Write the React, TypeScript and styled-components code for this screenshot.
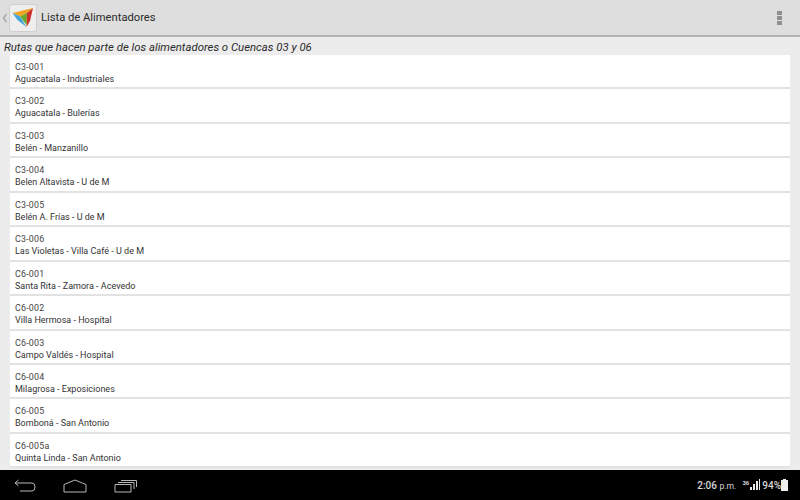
import React from "react";
import styled, { createGlobalStyle } from "styled-components";

const GlobalStyle = createGlobalStyle`
  html, body { margin: 0; padding: 0; background: #ececec; }
  body { font-family: Roboto, "Noto Sans", sans-serif; }
`;

const Screen = styled.div`
  width: 800px;
  height: 500px;
  display: flex;
  flex-direction: column;
  overflow: hidden;
  background: #ececec;
`;

const ActionBar = styled.header`
  height: 35px;
  flex: none;
  display: flex;
  align-items: center;
  background: #dedede;
  border-bottom: 2px solid #b4b4b4;
`;

const UpCaret = styled.svg`
  width: 6px;
  height: 10px;
  margin-left: 2px;
  flex: none;
`;

const LogoTile = styled.div`
  width: 28px;
  height: 28px;
  margin-left: 1px;
  flex: none;
  display: flex;
  align-items: center;
  justify-content: center;
  background: #eeeeee;
  border: 1px solid #cfcfcf;
  border-radius: 3px;
  box-sizing: border-box;
`;

const Title = styled.h1`
  margin: 0 0 0 4px;
  font-size: 11.2px;
  font-weight: 400;
  color: #2a2a2a;
  flex: 1;
`;

const Overflow = styled.div`
  width: 5px;
  margin-right: 18px;
  display: flex;
  flex-direction: column;
  gap: 1px;
`;

const Dot = styled.span`
  height: 4px;
  background: #8f8f8f;
`;

const Heading = styled.div`
  height: 18px;
  flex: none;
  padding: 2px 0 0 4px;
  box-sizing: border-box;
  font-size: 11.35px;
  font-style: italic;
  line-height: 17px;
  color: #2a2a2a;
`;

const List = styled.ul`
  list-style: none;
  margin: 0 10px;
  padding: 0;
  flex: 1;
  min-height: 0;
`;

const Row = styled.li`
  height: 34.45px;
  padding-top: 6px;
  box-sizing: border-box;
  background: #ffffff;
  border-bottom: 2px solid #e2e2e2;
`;

const Code = styled.div`
  padding-left: 5px;
  font-size: 8.9px;
  line-height: 12px;
  letter-spacing: 0.2px;
  color: #444;
`;

const RouteName = styled.div`
  padding-left: 5px;
  font-size: 9px;
  line-height: 12px;
  color: #333;
`;

const NavBar = styled.footer`
  height: 30px;
  flex: none;
  display: flex;
  align-items: center;
  background: #000;
  color: #d8d8d8;
`;

const NavIcon = styled.svg`
  width: 26px;
  height: 14px;
  flex: none;
  fill: none;
  stroke: #b8b8b8;
  stroke-width: 1;
  margin: 2px 10px 0 13px;
`;

const Status = styled.div`
  margin-left: auto;
  margin-right: 12px;
  display: flex;
  align-items: center;
  font-size: 10px;
  font-weight: 500;
`;

const Clock = styled.span`
  margin-right: 6px;
`;

const Meridiem = styled.span`
  font-size: 8.6px;
  font-weight: 400;
`;

const Network = styled.span`
  font-size: 6px;
  font-weight: 700;
  line-height: 6px;
  align-self: flex-start;
  margin-top: 1px;
`;

const Signal = styled.svg`
  margin: 0 2px 0 1px;
  fill: #e8e8e8;
`;

const routes = [
  ["C3-001", "Aguacatala - Industriales"],
  ["C3-002", "Aguacatala - Bulerías"],
  ["C3-003", "Belén - Manzanillo"],
  ["C3-004", "Belen Altavista - U de M"],
  ["C3-005", "Belén A. Frías - U de M"],
  ["C3-006", "Las Violetas - Villa Café - U de M"],
  ["C6-001", "Santa Rita - Zamora - Acevedo"],
  ["C6-002", "Villa Hermosa - Hospital"],
  ["C6-003", "Campo Valdés - Hospital"],
  ["C6-004", "Milagrosa - Exposiciones"],
  ["C6-005", "Bomboná - San Antonio"],
  ["C6-005a", "Quinta Linda - San Antonio"],
];

const Logo = () => (
  <svg width="24" height="22" viewBox="0 0 24 22">
    <polygon points="1.5,6 22,1 16,6 9,9.5" fill="#f0a323" />
    <polygon points="22,1 19,14 15.5,20 15.5,6.5" fill="#cf2f2c" />
    <polygon points="9,9.5 16,6 15.5,18" fill="#6aa82f" />
    <polygon points="1.5,6 9,9.5 15.5,20 6.5,13" fill="#3fa5dc" />
  </svg>
);

const App = () => (
  <Screen>
    <GlobalStyle />
    <ActionBar>
      <UpCaret viewBox="0 0 6 10">
        <path d="M4.5 1 L1.5 5 L4.5 9" fill="none" stroke="#a8a8a8" strokeWidth="1.5" />
      </UpCaret>
      <LogoTile>
        <Logo />
      </LogoTile>
      <Title>Lista de Alimentadores</Title>
      <Overflow>
        <Dot />
        <Dot />
        <Dot />
      </Overflow>
    </ActionBar>
    <Heading>Rutas que hacen parte de los alimentadores o Cuencas 03 y 06</Heading>
    <List>
      {routes.map(([code, name]) => (
        <Row key={code}>
          <Code>{code}</Code>
          <RouteName>{name}</RouteName>
        </Row>
      ))}
    </List>
    <NavBar>
      <NavIcon viewBox="0 0 26 14">
        <path d="M5.5 1 L2 4 L5.5 7 M2.5 4 H19 Q22 4 22 8 Q22 12 19 12 H7" />
      </NavIcon>
      <NavIcon viewBox="0 0 26 14">
        <path d="M2 5.5 L13 1 L24 5.5 V13 H2 Z" />
      </NavIcon>
      <NavIcon viewBox="0 0 26 14">
        <path d="M4 5.5 H20 V13 H4 Z M7 3.5 H23 V10 M10 1.5 H25.5 V8" />
      </NavIcon>
      <Status>
        <Clock>
          2:06 <Meridiem>p.m.</Meridiem>
        </Clock>
        <Network>36</Network>
        <Signal width="10" height="12" viewBox="0 0 10 12">
          <path d="M0 11h2V8H0zM3 11h2V5H3zM6 11h2V2H6zM9 11h1V0H9z" />
        </Signal>
        <span>94%</span>
        <svg width="7" height="12" viewBox="0 0 7 12">
          <path d="M2 0h3v1h2v11H0V1h2z" fill="#f0f0f0" />
        </svg>
      </Status>
    </NavBar>
  </Screen>
);

export default App;
